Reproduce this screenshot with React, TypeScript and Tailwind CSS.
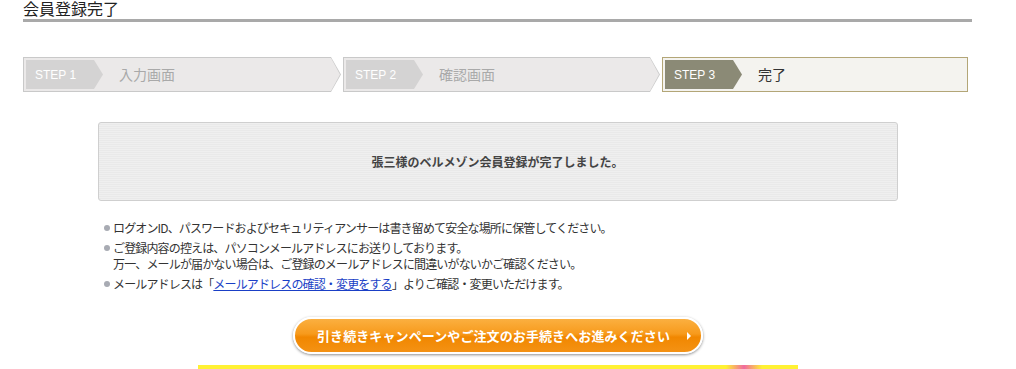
import React from "react";

const jp = { fontFamily: '"Noto Sans CJK JP", "Noto Sans", sans-serif' };
const lat = { fontFamily: '"Liberation Sans", Arial, sans-serif' };

function ArrowStep({ step, label }: { step: string; label: string }) {
  return (
    <div className="h-[35px] bg-[#c9c9c9] p-px [clip-path:polygon(0_0,calc(100%-10px)_0,100%_50%,calc(100%-10px)_100%,0_100%)] w-full">
      <div className="h-full bg-[#ebe9e9] flex items-center [clip-path:polygon(0_0,calc(100%-9px)_0,100%_50%,calc(100%-9px)_100%,0_100%)]">
        <div
          className="ml-[2px] h-[29px] w-[77px] bg-[#d4d3d3] text-white text-[12px] flex items-center pl-[9px] [clip-path:polygon(0_0,calc(100%-9px)_0,100%_50%,calc(100%-9px)_100%,0_100%)]"
          style={lat}
        >
          {step}
        </div>
        <div className="ml-[16px] text-[14px] text-[#a9a9a9]" style={jp}>
          {label}
        </div>
      </div>
    </div>
  );
}

export default function App() {
  return (
    <div className="w-[1016px] h-[369px] overflow-hidden bg-white" style={jp}>
      <div className="ml-[23px] w-[949px]">
        <h1 className="text-[16px] leading-[16px] text-[#222] font-normal" style={jp}>
          会員登録完了
        </h1>
        <div className="mt-[3px] h-[3px] bg-[#a9a9a9]" />

        <div className="mt-[35px] flex gap-[2px]">
          <div className="w-[318px]">
            <ArrowStep step="STEP 1" label="入力画面" />
          </div>
          <div className="w-[317px]">
            <ArrowStep step="STEP 2" label="確認画面" />
          </div>
          <div className="w-[306px] h-[35px] border border-[#b3a677] bg-[#f4f3ef] flex items-center">
            <div
              className="ml-[2px] h-[29px] w-[77px] bg-[#8b8a76] text-white text-[12px] flex items-center pl-[9px] [clip-path:polygon(0_0,calc(100%-9px)_0,100%_50%,calc(100%-9px)_100%,0_100%)]"
              style={lat}
            >
              STEP 3
            </div>
            <div className="ml-[16px] text-[14px] text-[#333]" style={jp}>
              完了
            </div>
          </div>
        </div>

        <div className="mx-auto mt-[30px] w-[800px] h-[79px] border border-[#cfcfcf] rounded-[3px] bg-[repeating-linear-gradient(0deg,#efefef_0px,#efefef_1px,#e9e9e9_1px,#e9e9e9_2px)] flex items-center justify-center">
          <span className="text-[12px] font-bold text-[#444]" style={jp}>
            張三様のベルメゾン会員登録が完了しました。
          </span>
        </div>

        <ul className="mt-[19px] ml-[81px] text-[12px] leading-[16px] tracking-[-0.85px] text-[#333] flex flex-col gap-[4px]" style={jp}>
          <li className="flex">
            <span className="mt-[5px] mr-[3px] w-[6px] h-[6px] rounded-full bg-[#a8abb3] shrink-0" />
            <span>ログオンID、パスワードおよびセキュリティアンサーは書き留めて安全な場所に保管してください。</span>
          </li>
          <li className="flex">
            <span className="mt-[5px] mr-[3px] w-[6px] h-[6px] rounded-full bg-[#a8abb3] shrink-0" />
            <span>
              ご登録内容の控えは、パソコンメールアドレスにお送りしております。
              <br />
              万一、メールが届かない場合は、ご登録のメールアドレスに間違いがないかご確認ください。
            </span>
          </li>
          <li className="flex">
            <span className="mt-[5px] mr-[3px] w-[6px] h-[6px] rounded-full bg-[#a8abb3] shrink-0" />
            <span>
              メールアドレスは「<a className="text-[#1a3fc6] underline">メールアドレスの確認・変更をする</a>」よりご確認・変更いただけます。
            </span>
          </li>
        </ul>

        <div className="mt-[25px] flex justify-center">
          <div className="w-[410px] h-[37px] rounded-full border-2 border-white shadow-[0_1px_3px_rgba(0,0,0,0.45)] bg-[linear-gradient(180deg,#fbb040_0%,#f79a1c_45%,#f18700_55%,#f49214_100%)] flex items-center justify-center relative">
            <span className="whitespace-nowrap text-[13px] font-bold text-white tracking-[0.1px] -ml-[8px]" style={jp}>
              引き続きキャンペーンやご注文のお手続きへお進みください
            </span>
            <span className="absolute right-[10px] top-[13px] w-0 h-0 border-y-[4px] border-y-transparent border-l-[4px] border-l-white" />
          </div>
        </div>

        <div className="mx-auto mt-[11px] w-[600px] h-[6px] bg-[linear-gradient(90deg,#fff133_0%,#fff133_88%,#f06aa0_91%,#fff133_94%,#fff133_100%)]" />
      </div>
    </div>
  );
}
